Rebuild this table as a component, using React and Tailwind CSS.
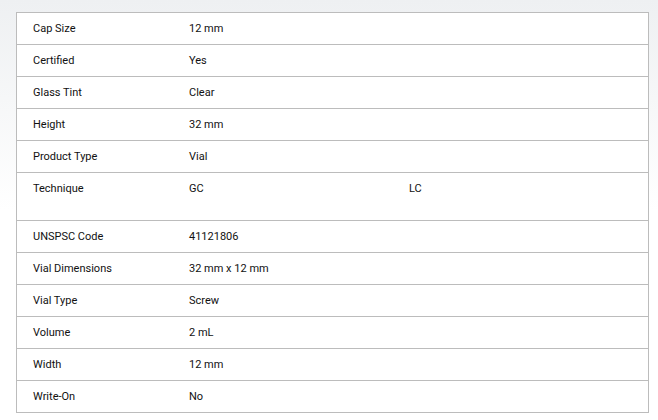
import React from 'react';

const specs = [
  { label: 'Cap Size', values: ['12 mm'] },
  { label: 'Certified', values: ['Yes'] },
  { label: 'Glass Tint', values: ['Clear'] },
  { label: 'Height', values: ['32 mm'] },
  { label: 'Product Type', values: ['Vial'] },
  { label: 'Technique', values: ['GC', 'LC'], list: true },
  { label: 'UNSPSC Code', values: ['41121806'] },
  { label: 'Vial Dimensions', values: ['32 mm x 12 mm'] },
  { label: 'Vial Type', values: ['Screw'] },
  { label: 'Volume', values: ['2 mL'] },
  { label: 'Width', values: ['12 mm'] },
  { label: 'Write-On', values: ['No'] },
];

const App = () => {
  return (
    <div className="w-[658px] h-[420px] overflow-hidden bg-gradient-to-b from-[#eef0f2] via-white to-white font-['Roboto',sans-serif] text-[11px] leading-[13px] text-[#111]">
      <div className="pt-[12px] pl-[16px] pr-[9px]">
        {/* spec table */}
        <div className="border-t border-l border-r border-[#bcbcbc] bg-white">
          {specs.map((row) => (
            <div key={row.label} className="flex border-b border-[#bcbcbc]">
              <div className="w-[156px] shrink-0 pl-[16px] pt-[9px] pb-[9px]">{row.label}</div>
              <div className="flex-1 pl-[16px] pt-[9px] pb-[9px]">
                {row.list ? (
                  <div className="flex">
                    {row.values.map((v) => (
                      <div key={v} className="w-[220px] pb-[16px]">{v}</div>
                    ))}
                  </div>
                ) : (
                  row.values[0]
                )}
              </div>
            </div>
          ))}
        </div>
      </div>
    </div>
  );
};

export default App;
